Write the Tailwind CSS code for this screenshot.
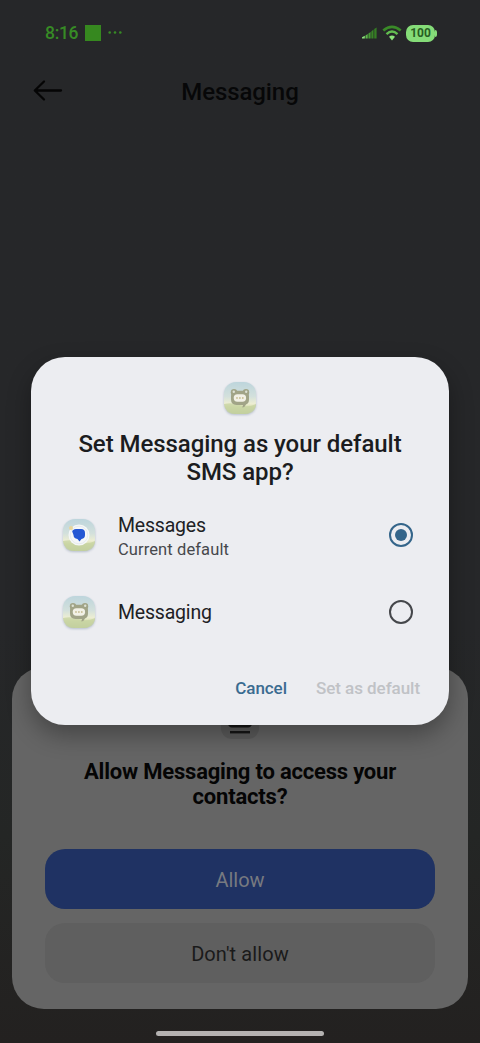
<!DOCTYPE html>
<html lang="en">
<head>
<meta charset="utf-8">
<title>Messaging</title>
<script src="https://cdn.jsdelivr.net/npm/@tailwindcss/browser@4"></script>
</head>
<body class="font-[Roboto,sans-serif]">
<svg width="0" height="0" class="absolute" aria-hidden="true">
  <defs>
    <linearGradient id="sky" x1="0" y1="0" x2="0" y2="1">
      <stop offset="0" stop-color="#bdd5dc"/><stop offset=".45" stop-color="#d3e0dc"/><stop offset=".68" stop-color="#edeed2"/><stop offset=".78" stop-color="#d6deae"/><stop offset="1" stop-color="#bccb9b"/>
    </linearGradient>
    <symbol id="bear" viewBox="0 0 32 32">
      <rect width="32" height="32" rx="12" fill="url(#sky)"/>
      <path d="M0 22Q8 20 16 23T32 22V24Q30 32 21 32H11Q1 32 0 22Z" fill="#c5d29f" opacity=".7"/>
      <circle cx="10" cy="10.200" r="3.200" fill="#a1a487"/><circle cx="22" cy="10.200" r="3.200" fill="#a1a487"/>
      <path d="M12 8.800H20Q25 8.800 25 14V17.500Q25 21.500 22 22.500Q21 25.200 18.300 25.600L19 23H12.500Q7 22.800 7 17.500V14Q7 8.800 12 8.800Z" fill="#a1a487"/>
      <circle cx="9.800" cy="9.800" r="1.200" fill="#dde2d5"/><circle cx="22.200" cy="9.800" r="1.200" fill="#dde2d5"/>
      <rect x="9.700" y="12.300" width="12.400" height="7.400" rx="3.700" fill="#f2f1e6"/>
      <circle cx="13" cy="16" r=".9" fill="#c9bf95"/><circle cx="15.900" cy="16" r=".9" fill="#c9bf95"/><circle cx="18.800" cy="16" r=".9" fill="#c9bf95"/>
    </symbol>
  </defs>
</svg>
<div class="relative flex h-[1043px] w-[480px] flex-col overflow-hidden bg-linear-to-b from-[#262729] from-60% via-[#242625] via-80% to-[#232120]">
  <header class="flex h-[60px] shrink-0 items-center pt-[6px] pr-[43px] pl-[45px] text-[#378b25]">
    <span class="w-[33px] text-[17.500px] leading-5 font-medium tracking-[-0.3px]">8:16</span>
    <span class="ml-[7px] size-4 bg-[#36881f]"></span>
    <svg class="ml-[7px]" width="14" height="4" viewBox="0 0 14 4" fill="#378b25"><circle cx="1.700" cy="1.500" r="1.300"/><circle cx="7" cy="1.500" r="1.300"/><circle cx="12.300" cy="1.500" r="1.300"/></svg>
    <svg class="ml-auto" width="16" height="12" viewBox="0 0 16 12"><path d="M0 11.500V10.200L2.800 8.800V11.500Z" fill="#8ce27b"/><path d="M3.500 8.400L5.700 7V11.500H3.500Z" fill="#5dba4b"/><path d="M6.400 6.600L8.600 5V11.500H6.400Z" fill="#469b35"/><path d="M9.300 4.400L11.500 2.600V11.500H9.300Z" fill="#388326"/><path d="M12.200 2.100L14.600.5V11.500H12.200Z" fill="#357c24"/></svg>
    <svg class="ml-[4px]" width="20" height="16" viewBox="0 0 20 16" fill="none"><path d="M1.300 5.600Q10-2 18.700 5.600" stroke="#3a8a28" stroke-width="2.600"/><path d="M4.500 9.200Q10 4 15.500 9.200" stroke="#62bd50" stroke-width="2.400"/><path d="M7 11.800Q10 9.200 13 11.800L10 15.500Z" fill="#8ce57a"/></svg>
    <span class="ml-1 flex h-[17px] w-[29px] items-center justify-center rounded-[7px] bg-[#85dc78] text-[12px] font-bold text-[#285f22]">100</span><span class="h-[7px] w-[2px] rounded-r-full bg-[#85dc78]"></span>
  </header>
  <nav class="relative flex h-[62px] shrink-0 items-center justify-center">
    <svg class="absolute top-[19px] left-[33px]" width="30" height="23" viewBox="0 0 30 23" fill="none" stroke="#050505" stroke-width="2.300" stroke-linecap="round" stroke-linejoin="round"><path d="M28 11.500H2M11 2.500L1.800 11.500L11 20.500"/></svg>
    <h1 class="mt-[2px] text-[24px] font-medium tracking-[-0.1px] text-[#070708]">Messaging</h1>
  </nav>
  <section class="mx-3 mt-auto flex h-[342px] shrink-0 flex-col items-center rounded-[32px] bg-[#656565] px-[33.400px] pt-[34px]">
    <div class="flex size-[38px] shrink-0 items-end justify-center rounded-[11px] bg-[#5b5b5b]">
      <svg width="26" height="32" viewBox="0 0 26 32" fill="none" stroke="#161616" stroke-width="2.400"><rect x="2" y="2" width="22" height="17.300" rx="3"/><circle cx="13" cy="9" r="3"/><path d="M6 19Q13 13 20 19"/><path d="M3 25.200H23"/></svg>
    </div>
    <h2 class="mt-[20px] text-center text-[22px] leading-[25px] font-bold tracking-[-0.2px] whitespace-nowrap text-[#050505]">Allow Messaging to access your<br>contacts?</h2>
    <button class="mt-[40px] h-[59.500px] w-full shrink-0 rounded-[20px] bg-[#1f3263] pt-[2px] text-[20px] text-[#777a80]">Allow</button>
    <button class="mt-[14.500px] h-[59.500px] w-full shrink-0 rounded-[20px] bg-[#5f5f5f] pt-[2px] text-[20px] tracking-[0.1px] text-[#1a1a1a]">Don't allow</button>
  </section>
  <footer class="flex h-[34px] shrink-0 justify-center pt-[22px]"><span class="h-[5px] w-[168px] rounded-full bg-[#b4b2b1]"></span></footer>

  <main class="absolute top-[356.500px] left-[31px] flex h-[368px] w-[418px] flex-col items-center rounded-[34px] bg-[#ecedf1] pt-[25px] shadow-[0_10px_24px_rgba(0,0,0,0.32)]">
    <svg class="shrink-0 drop-shadow-[0_1px_1px_rgba(100,120,150,0.4)]" width="32" height="32"><use href="#bear"/></svg>
    <h2 class="mt-4 text-center text-[24px] leading-[28px] font-medium tracking-[-0.06px] whitespace-nowrap text-[#1b1c20]">Set Messaging as your default<br>SMS app?</h2>
    <div class="mt-[11px] flex h-[77px] w-full items-center pr-9 pl-8">
      <svg class="drop-shadow-[0_1px_1px_rgba(100,120,150,0.4)]" width="32" height="32" viewBox="0 0 32 32"><rect width="32" height="32" rx="12" fill="url(#sky)"/><path d="M0 22Q8 20 16 23T32 22V24Q30 32 21 32H11Q1 32 0 22Z" fill="#c5d29f" opacity=".7"/><circle cx="16" cy="16" r="10.500" fill="#f5f7f8"/><circle cx="16" cy="16" r="8.800" fill="none" stroke="#dfe5ea" stroke-width=".7"/><circle cx="8" cy="9" r="2" fill="#e8d79c"/><path d="M13 10H18Q22 10 22 14V16Q22 19.500 18.500 20L16.500 22.500L14.500 20Q10.500 19.500 10.500 16L9.200 12.500Q9.500 10.500 13 10Z" fill="#2457d4"/></svg>
      <div class="mt-[3px] ml-[23px] flex flex-col"><span class="text-[19.500px] leading-[25px] tracking-[-0.2px] text-[#202124]">Messages</span><span class="text-[16.500px] leading-[23px] tracking-[0.1px] text-[#46484c]">Current default</span></div>
      <span class="ml-auto flex size-6 items-center justify-center rounded-full border-[2.500px] border-[#34658a]"><i class="size-3 rounded-full bg-[#34658a]"></i></span>
    </div>
    <div class="flex h-[77px] w-full items-center pr-9 pl-8">
      <svg class="drop-shadow-[0_1px_1px_rgba(100,120,150,0.4)]" width="32" height="32"><use href="#bear"/></svg>
      <span class="mt-[2px] ml-[23px] text-[19.500px] tracking-[-0.2px] text-[#202124]">Messaging</span>
      <span class="ml-auto size-6 rounded-full border-[2.500px] border-[#45474b]"></span>
    </div>
    <div class="mt-[27px] flex w-full justify-end gap-[29px] pr-[29px] text-[17px] leading-5 font-medium tracking-[-0.05px]"><span class="text-[#3a6b90]">Cancel</span><span class="text-[#c0c2c6]">Set as default</span></div>
  </main>
</div>
</body>
</html>
